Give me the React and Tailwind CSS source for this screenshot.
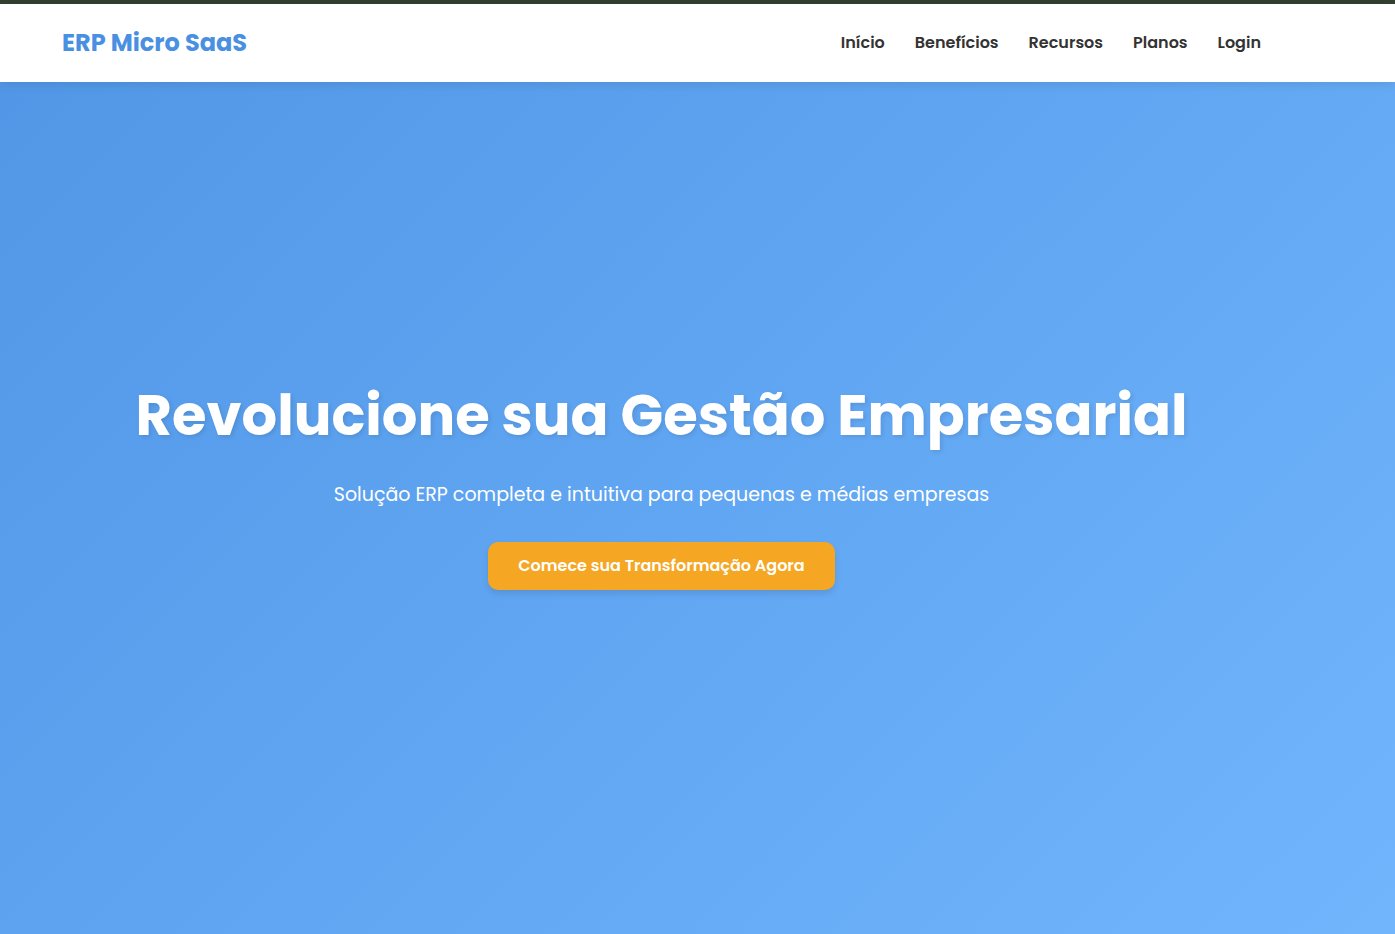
const links = ["Início", "Benefícios", "Recursos", "Planos", "Login"];

export default function App() {
  return (
    <div className="flex min-h-screen flex-col border-t-4 border-[#34402f] bg-linear-135 from-[#5096e6] to-[#71b5fd] font-['Poppins','Inter',sans-serif]">
      <header className="relative flex min-h-[78px] items-center justify-between bg-white pr-[134px] pl-[62px] shadow-[0_2px_10px_rgba(0,0,0,0.1)]">
        <a href="#inicio" className="text-2xl font-bold text-[#4a90e2]">ERP Micro SaaS</a>
        <nav className="flex gap-[30px]">
          {links.map((label) => (
            <a key={label} href={"#" + label.toLowerCase()} className="text-base font-semibold text-[#333333]">
              {label}
            </a>
          ))}
        </nav>
      </header>
      <main className="flex grow flex-col items-center justify-center pr-[72px] pb-[52px] text-center text-white">
        <h1 className="mb-5 text-[56px] leading-[84px] font-bold text-shadow-[2px_2px_4px_rgba(0,0,0,0.1)]">
          Revolucione sua Gestão Empresarial
        </h1>
        <p className="mb-[30px] text-[19px] leading-[34px]">
          Solução ERP completa e intuitiva para pequenas e médias empresas
        </p>
        <button className="rounded-[10px] bg-[#f5a623] px-[30px] py-3 text-base font-semibold shadow-[0_4px_6px_rgba(0,0,0,0.1)]">
          Comece sua Transformação Agora
        </button>
      </main>
    </div>
  );
}
